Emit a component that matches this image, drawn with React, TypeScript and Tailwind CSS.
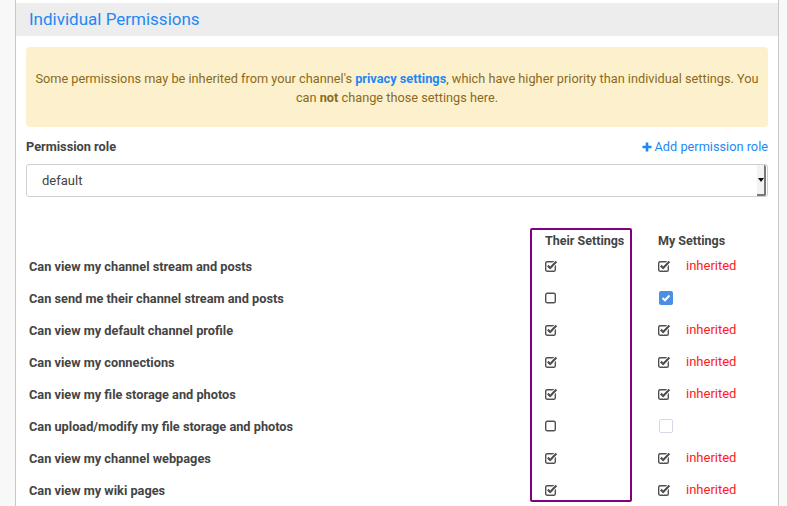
import React from "react";

type Row = {
  label: string;
  their: boolean;
  mine: "inherited" | "checked" | "disabled";
};

const rows: Row[] = [
  { label: "Can view my channel stream and posts", their: true, mine: "inherited" },
  { label: "Can send me their channel stream and posts", their: false, mine: "checked" },
  { label: "Can view my default channel profile", their: true, mine: "inherited" },
  { label: "Can view my connections", their: true, mine: "inherited" },
  { label: "Can view my file storage and photos", their: true, mine: "inherited" },
  { label: "Can upload/modify my file storage and photos", their: false, mine: "disabled" },
  { label: "Can view my channel webpages", their: true, mine: "inherited" },
  { label: "Can view my wiki pages", their: true, mine: "inherited" },
];

// font-awesome style "check-square-o"
function CheckSquareIcon() {
  return (
    <svg width="13" height="12" viewBox="0 0 13 12" className="block">
      <rect x="0.7" y="1.7" width="9.6" height="9.6" rx="1.6" fill="none" stroke="#505050" strokeWidth="1.4" />
      <polyline points="2.8,5.6 5.2,8 11.4,1.6" fill="none" stroke="#fff" strokeWidth="4" />
      <polyline points="2.8,5.6 5.2,8 11.4,1.6" fill="none" stroke="#505050" strokeWidth="2.2" />
    </svg>
  );
}

function SquareIcon() {
  return (
    <svg width="13" height="12" viewBox="0 0 13 12" className="block">
      <rect x="0.7" y="1.2" width="9.6" height="9.6" rx="1.6" fill="none" stroke="#505050" strokeWidth="1.4" />
    </svg>
  );
}

function MyCell({ mine }: { mine: Row["mine"] }) {
  if (mine === "checked") {
    return (
      <div className="flex h-8 items-center pl-[27px]">
        <span className="flex h-[14px] w-[14px] items-center justify-center rounded-[2px] bg-[#4a8fe2]">
          <svg width="10" height="8" viewBox="0 0 10 8">
            <polyline points="1.5,4 4,6.3 8.5,1.5" fill="none" stroke="#fff" strokeWidth="2" />
          </svg>
        </span>
      </div>
    );
  }
  if (mine === "disabled") {
    return (
      <div className="flex h-8 items-center pl-[27px]">
        <span className="h-[14px] w-[14px] rounded-[2px] border border-[#d3dae6] bg-white" />
      </div>
    );
  }
  return (
    <div className="flex h-8 items-center pl-[26px]">
      <CheckSquareIcon />
      <span className="ml-[15px] text-[13px] text-[#ff1a1a]">inherited</span>
    </div>
  );
}

export default function App() {
  return (
    <div className="h-[506px] overflow-hidden bg-[#f8f8f8] pl-[15px] pr-[8px] font-['Roboto',sans-serif]">
      <div className="h-full border-x border-[#c8c8c8] bg-white pt-[3px]">
        <div className="flex h-[33px] items-center bg-[#ededed] px-[13px]">
          <h2 className="text-[17px] text-[#1f88f3]">Individual Permissions</h2>
        </div>

        <div className="px-[10px] pt-[11px]">
          <div className="flex flex-col items-center whitespace-nowrap rounded-[4px] bg-[#fdf1cd] pb-[20px] pt-[22px] text-[12.75px] leading-[19px] text-[#8a6a1c]">
            <span>
              Some permissions may be inherited from your channel's{" "}
              <a className="font-bold text-[#1f88f3]">privacy settings</a>, which have higher priority than individual
              settings. You
            </span>
            <span>
              can <b>not</b> change those settings here.
            </span>
          </div>

          <div className="mt-[10px] flex items-center justify-between text-[12.75px]">
            <span className="font-bold text-[#444]">Permission role</span>
            <a className="flex items-center gap-[3px] text-[#1f88f3]">
              <svg width="10" height="10" viewBox="0 0 10 10">
                <path d="M5 0.5v9M0.5 5h9" stroke="#1f88f3" strokeWidth="2.6" />
              </svg>
              Add permission role
            </a>
          </div>

          <div className="mt-[8px] flex h-[33px] items-center justify-between rounded-[3px] border border-[#cfcfcf] bg-white pl-[15px] text-[13px] text-[#444]">
            <span>default</span>
            <span className="mr-[1px] flex h-[31px] w-[9px] items-center justify-center rounded-r-[2px] border-b-2 border-r-2 border-[#777] bg-[#f3f3f3]">
              <span className="h-0 w-0 border-x-[3px] border-t-[4px] border-x-transparent border-t-[#111]" />
            </span>
          </div>

          <div className="mt-[31px] flex text-[12.75px]">
            <div className="w-[504px]">
              <div className="h-[22px]" />
              {rows.map((r) => (
                <div key={r.label} className="flex h-8 items-center pl-[3px] font-bold text-[#444]">
                  {r.label}
                </div>
              ))}
            </div>

            <div className="h-[274px] w-[102px] rounded-[2px] border-2 border-[#800080]">
              <div className="flex h-[20px] items-center pl-[13px] pt-[3px] text-[12.5px] font-bold text-[#444]">
                Their Settings
              </div>
              {rows.map((r, i) => (
                <div
                  key={r.label}
                  className={i === rows.length - 1 ? "flex h-[26px] items-start pl-[13px] pt-[10px]" : "flex h-8 items-center pl-[13px]"}
                >
                  {r.their ? <CheckSquareIcon /> : <SquareIcon />}
                </div>
              ))}
            </div>

            <div className="flex-1">
              <div className="flex h-[22px] items-center pl-[26px] pt-[4px] text-[12.5px] font-bold text-[#444]">
                My Settings
              </div>
              {rows.map((r) => (
                <MyCell key={r.label} mine={r.mine} />
              ))}
            </div>
          </div>
        </div>
      </div>
    </div>
  );
}
